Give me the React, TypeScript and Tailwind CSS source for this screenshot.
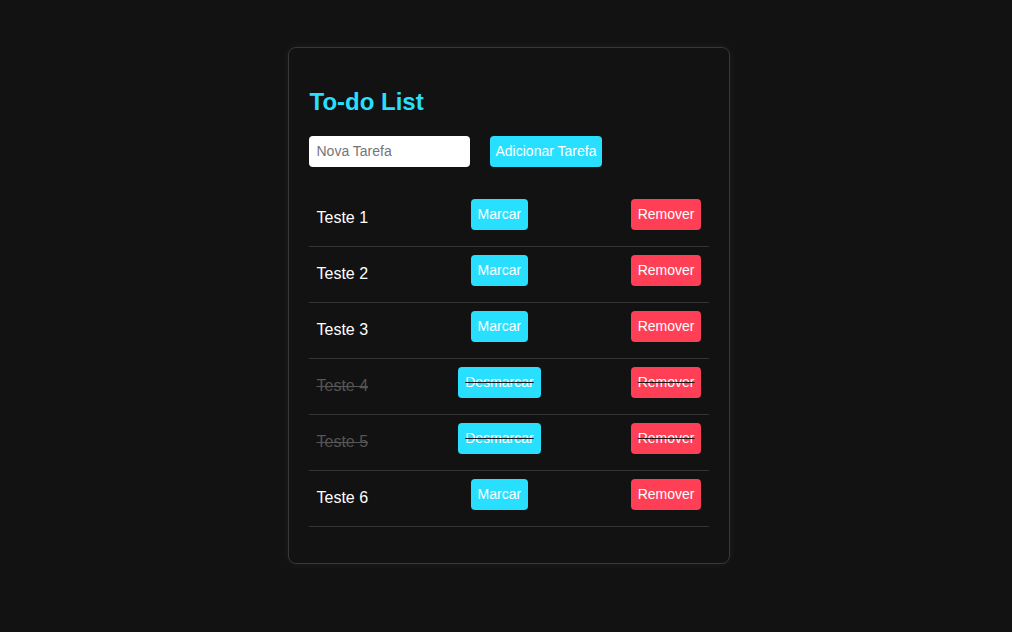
import { useState } from 'react';

interface Task {
  id: number;
  text: string;
  done: boolean;
}

const initialTasks: Task[] = [
  { id: 1, text: 'Teste 1', done: false },
  { id: 2, text: 'Teste 2', done: false },
  { id: 3, text: 'Teste 3', done: false },
  { id: 4, text: 'Teste 4', done: true },
  { id: 5, text: 'Teste 5', done: true },
  { id: 6, text: 'Teste 6', done: false },
];

export default function App() {
  const [tasks, setTasks] = useState<Task[]>(initialTasks);
  const [newTask, setNewTask] = useState('');

  const addTask = () => {
    if (!newTask.trim()) return;
    setTasks([...tasks, { id: Date.now(), text: newTask.trim(), done: false }]);
    setNewTask('');
  };

  const toggleTask = (id: number) => {
    setTasks(tasks.map((t) => (t.id === id ? { ...t, done: !t.done } : t)));
  };

  const removeTask = (id: number) => {
    setTasks(tasks.filter((t) => t.id !== id));
  };

  return (
    <div className="min-h-screen bg-[#121212] flex justify-center items-start pt-[47px] pl-[5px] font-['Liberation_Sans',Arial,sans-serif]">
      <div className="w-[442px] border border-[#383838] rounded-lg bg-[#121212] px-5 pt-5 pb-5 shadow-[0_0_10px_rgba(255,255,255,0.06)]">
        <h1 className="mt-5 mb-5 ml-[1px] text-2xl leading-[27.6px] font-bold text-[#29dfff]">To-do List</h1>

        <div className="flex gap-5 mb-6">
          <input
            type="text"
            value={newTask}
            onChange={(e) => setNewTask(e.target.value)}
            placeholder="Nova Tarefa"
            className="w-[161px] h-[31px] rounded bg-white px-2 text-sm text-black placeholder:text-[#757575] outline-none"
          />
          <button
            onClick={addTask}
            className="h-[31px] px-[6px] rounded bg-[#29dfff] text-sm text-white"
          >
            Adicionar Tarefa
          </button>
        </div>

        <ul className="mb-4">
          {tasks.map((task) => (
            <li
              key={task.id}
              className="flex justify-between items-center h-[56px] pl-2 pr-[7px] py-2 border-b border-[#333]"
            >
              <span
                className={`text-base leading-[18px] ${task.done ? 'text-[#555] line-through decoration-[#555]' : 'text-white'}`}
              >
                {task.text}
              </span>
              <button
                onClick={() => toggleTask(task.id)}
                className={`self-start h-[31px] px-[7px] rounded bg-[#29dfff] text-sm text-white ${task.done ? 'line-through decoration-[#1a1a1a]' : ''}`}
              >
                {task.done ? 'Desmarcar' : 'Marcar'}
              </button>
              <button
                onClick={() => removeTask(task.id)}
                className={`self-start h-[31px] px-[7px] rounded bg-[#ff3f56] text-sm text-white ${task.done ? 'line-through decoration-[#1a1a1a]' : ''}`}
              >
                Remover
              </button>
            </li>
          ))}
        </ul>
      </div>
    </div>
  );
}
